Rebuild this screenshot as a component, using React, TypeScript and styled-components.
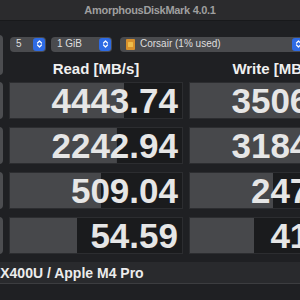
import styled, { createGlobalStyle } from 'styled-components';

const GlobalStyle = createGlobalStyle`
  html, body {
    margin: 0;
    padding: 0;
    background-color: #1f2023;
    overflow: hidden;
  }
  body {
    width: 300px;
    height: 300px;
    font-family: "Liberation Sans", Arial, sans-serif;
  }
`;

const Page = styled.div`
  width: 300px;
  height: 300px;
  overflow: hidden;
  background-color: #1f2023;
`;

const TitleBar = styled.div`
  height: 20px;
  background-color: #2b2b2d;
  border-bottom: 1px solid #18191b;
  display: flex;
  align-items: center;
  justify-content: center;
  color: #9f9f9f;
  font-size: 11px;
  font-weight: 700;
  letter-spacing: -0.3px;
`;

const Content = styled.div`
  margin-left: -77px;
  padding-top: 14px;
  width: 440px;
`;

const TopGrid = styled.div`
  display: grid;
  grid-template-columns: 80px 174px 174px;
  grid-template-rows: 18px 27px;
  column-gap: 6px;
`;

const AllButton = styled.div`
  grid-row: 1 / 3;
  height: 40px;
  border-radius: 4px;
  background-color: #4c4d50;
  color: #e6e6e6;
  font-size: 13px;
  font-weight: 700;
  display: flex;
  align-items: center;
  justify-content: center;
  padding-right: 14px;
`;

const PopupRow = styled.div`
  grid-column: 2 / 4;
  display: flex;
  align-items: center;
  gap: 5px;
  padding-left: 1px;
`;

const Popup = styled.div<{ $width: number; $gapBefore?: number }>`
  width: ${(p) => p.$width}px;
  margin-left: ${(p) => p.$gapBefore ?? 0}px;
  height: 15px;
  box-sizing: border-box;
  border-radius: 4px;
  background-color: #4a4b4e;
  display: flex;
  align-items: center;
  padding: 1px 1px 1px 6px;
  gap: 5px;
  color: #dedede;
  font-size: 10px;
`;

const PopupLabel = styled.span`
  flex: 1;
  white-space: nowrap;
  line-height: 1;
`;

const Stepper = styled.div`
  width: 12px;
  height: 13px;
  border-radius: 3px;
  background-color: #2e6be4;
  display: flex;
  align-items: center;
  justify-content: center;
`;

const Header = styled.div<{ $col: number }>`
  grid-column: ${(p) => p.$col};
  display: flex;
  align-items: flex-end;
  justify-content: center;
  padding-bottom: 3px;
  color: #f0f0f0;
  font-size: 15px;
  font-weight: 700;
  line-height: 17px;
`;

const ResultGrid = styled.div`
  margin-top: 2px;
  display: grid;
  grid-template-columns: 80px 174px 174px;
  grid-auto-rows: 37px;
  column-gap: 6px;
  row-gap: 8px;
`;

const LabelButton = styled.div`
  box-sizing: border-box;
  border-radius: 4px;
  background-color: #4c4d50;
  color: #e6e6e6;
  font-size: 9px;
  font-weight: 700;
  line-height: 11px;
  display: flex;
  align-items: center;
  justify-content: center;
  text-align: center;
  padding-right: 16px;
`;

const Cell = styled.div`
  box-sizing: border-box;
  border: 1px solid #2c2d30;
  background-color: #1a1b1d;
  background-image: linear-gradient(#47484b, #47484b);
  background-repeat: no-repeat;
  display: flex;
  align-items: center;
  justify-content: flex-end;
  padding-right: 4px;
  color: #e6e6e6;
  font-size: 35px;
  font-weight: 700;
  line-height: 1;
  white-space: nowrap;
`;

const Footer = styled.div`
  margin-top: 8px;
  height: 21px;
  background-color: #292a2d;
  border-bottom: 1px solid #3c3d40;
  display: flex;
  align-items: center;
  padding-left: 15px;
  color: #ececec;
  font-size: 14px;
  font-weight: 700;
  white-space: nowrap;
`;

function StepperIcon() {
  return (
    <Stepper>
      <svg width="7" height="10" viewBox="0 0 7 10" fill="none">
        <path d="M1.5 4 L3.5 2 L5.5 4" stroke="#fff" strokeWidth="1.2" strokeLinecap="round" strokeLinejoin="round" />
        <path d="M1.5 6 L3.5 8 L5.5 6" stroke="#fff" strokeWidth="1.2" strokeLinecap="round" strokeLinejoin="round" />
      </svg>
    </Stepper>
  );
}

function DriveIcon() {
  return (
    <svg width="9" height="11" viewBox="0 0 9 11">
      <rect x="0" y="0" width="9" height="11" rx="1" fill="#d8902c" />
      <rect x="2" y="3" width="5" height="5" rx="0.5" fill="#f0bd4a" />
    </svg>
  );
}

const rows = [
  { label: ['SEQ1M', 'Q8T1'], read: '4443.74', write: '3506.81' },
  { label: ['SEQ128K', 'Q32T1'], read: '2242.94', write: '3184.27' },
  { label: ['RND4K', 'Q32T16'], read: '509.04', write: '247.36' },
  { label: ['RND4K', 'Q1T1'], read: '54.59', write: '41.86' },
];

// bar length is logarithmic: 0.1 MB/s empty, 1e6 MB/s full
function barSize(value: string) {
  const pct = ((Math.log10(parseFloat(value)) + 1) / 7) * 100;
  return `${Math.max(0, Math.min(100, pct))}% 100%`;
}

export default function App() {
  return (
    <Page>
      <GlobalStyle />
      <TitleBar>AmorphousDiskMark 4.0.1</TitleBar>
      <Content>
        <TopGrid>
          <AllButton>All</AllButton>
          <PopupRow>
            <Popup $width={36}>
              <PopupLabel>5</PopupLabel>
              <StepperIcon />
            </Popup>
            <Popup $width={61}>
              <PopupLabel>1 GiB</PopupLabel>
              <StepperIcon />
            </Popup>
            <Popup $width={185} $gapBefore={3}>
              <DriveIcon />
              <PopupLabel>Corsair (1% used)</PopupLabel>
              <StepperIcon />
            </Popup>
          </PopupRow>
          <Header $col={2}>Read [MB/s]</Header>
          <Header $col={3}>Write [MB/s]</Header>
        </TopGrid>
        <ResultGrid>
          {rows.map((r) => [
            <LabelButton key={`${r.read}-l`}>
              {r.label[0]}
              <br />
              {r.label[1]}
            </LabelButton>,
            <Cell key={`${r.read}-r`} style={{ backgroundSize: barSize(r.read) }}>
              {r.read}
            </Cell>,
            <Cell key={`${r.read}-w`} style={{ backgroundSize: barSize(r.write) }}>
              {r.write}
            </Cell>,
          ])}
        </ResultGrid>
        <Footer>Corsair EX400U / Apple M4 Pro</Footer>
      </Content>
    </Page>
  );
}
